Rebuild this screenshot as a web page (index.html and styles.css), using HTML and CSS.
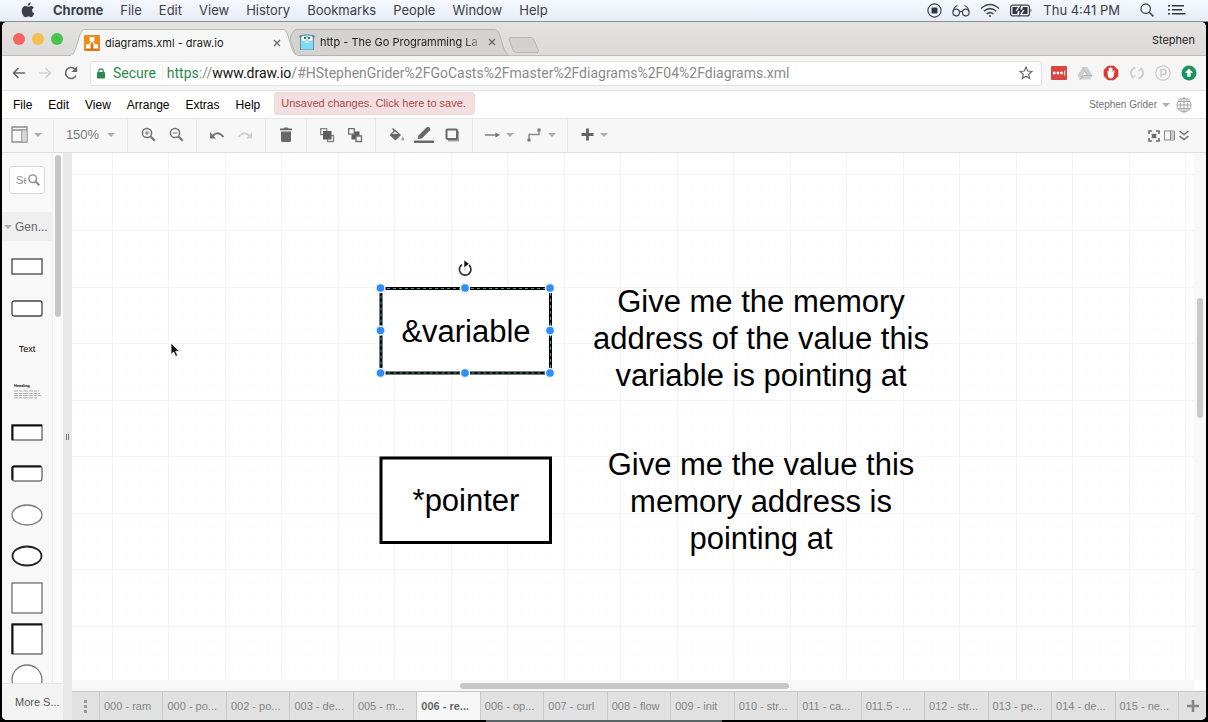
FILE: index.html
```html
<!DOCTYPE html>
<html lang="en">
<head>
<meta charset="utf-8">
<title>diagrams.xml - draw.io</title>
<link rel="stylesheet" href="styles.css">
</head>
<body>
<header class="macbar">
  <svg class="apple" width="14" height="16" viewBox="0 0 14 16"><path fill="#3c4046" d="M9.7.6c.1 1.8-1.4 3.3-3 3.3C6.500 2.200 8 .7 9.700.6zM7 4.700c.8 0 1.600-.8 3-.8 1.100 0 2.200.6 2.800 1.500-2.500 1.500-2 4.900.5 5.900-.5 1.500-1.800 3.900-3.200 3.900-1 0-1.500-.6-2.700-.6s-1.700.6-2.600.6C2.700 15.200.7 11.500.7 8.700c0-3 1.900-4.700 3.700-4.700 1.200 0 1.900.7 2.600.7z"/></svg>
  <nav class="macmenu">
    <a href="#" class="strong">Chrome</a><a href="#">File</a><a href="#">Edit</a><a href="#">View</a><a href="#">History</a><a href="#">Bookmarks</a><a href="#">People</a><a href="#">Window</a><a href="#">Help</a>
  </nav>
  <div class="macstatus">
    <svg width="15" height="15" viewBox="0 0 15 15"><circle cx="7.500" cy="7.500" r="6.600" fill="none" stroke="#44484e" stroke-width="1.200"/><rect x="4.500" y="4.500" width="6" height="6" rx="1" fill="#33373d"/></svg>
    <svg width="18" height="13" viewBox="0 0 18 13" fill="none" stroke="#44484e" stroke-width="1.200"><circle cx="4.200" cy="8.500" r="3.300"/><circle cx="13.800" cy="8.500" r="3.300"/><path d="M7.400 8q1.600-1.400 3.200 0M1 7.500C1.500 4.500 3 2.500 5.500 1.500M17 7.500C16.500 4.500 15 2.500 12.500 1.500"/></svg>
    <svg width="20" height="15" viewBox="0 0 20 15" fill="none" stroke="#44484e" stroke-width="1.500"><path d="M1 5.500q9-8 18 0M3.800 8.300q6.200-5.400 12.400 0M6.600 11q3.400-2.800 6.800 0"/><circle cx="10" cy="13" r="1" fill="#44484e" stroke="none"/></svg>
    <svg width="23" height="13" viewBox="0 0 23 13"><rect x=".6" y="1.100" width="18.800" height="10.800" rx="2" fill="none" stroke="#44484e" stroke-width="1.200"/><path d="M20.500 4.500q2 2 0 4z" fill="#44484e"/><path d="M2.500 3h5.500l-2.500 4h2.500l-1 3H2.500zM13 3h4.500v7h-5.500l2.500-4h-2.500z" fill="#33373d"/><path d="M11.500 0L7 7h2.700l-1.200 6L13 5.800h-2.700z" fill="#33373d"/></svg>
    <span class="clock">Thu 4:41 PM</span>
    <svg class="spot" width="14" height="14" viewBox="0 0 14 14" fill="none" stroke="#44484e" stroke-width="1.300"><circle cx="5.700" cy="5.700" r="4.700"/><path d="M9.200 9.200l4.200 4.200" stroke-width="1.600"/></svg>
    <svg width="18" height="12" viewBox="0 0 18 12" fill="#33373d"><path d="M0 1h2v1.500H0zM4 1h12v1.500H4zM0 5h2v1.500H0zM4 5h10v1.500H4zM0 9h2v1.500H0zM4 9h13.500v1.500H4z"/></svg>
  </div>
</header>

<div class="window">
  <div class="tabstrip">
    <div class="lights"><i class="red"></i><i class="yellow"></i><i class="green"></i></div>
    <div class="btab active">
      <svg class="shape" width="228" height="27" viewBox="0 0 228 27"><path d="M0 27C4 26 5 22 8 12S12 .5 16 .5H212C216 .5 217 3 219.500 12S224 26 228 27z" fill="#f6f6f6" stroke="#b9b9b8"/><path d="M1 27h226" stroke="#f6f6f6" stroke-width="2"/></svg>
      <svg class="fav" width="16" height="16" viewBox="0 0 16 16"><rect width="16" height="16" rx="1" fill="#ee8a1a"/><path d="M9 9l7 7H4L2 14z" fill="#d3740d"/><path d="M8 5L4.500 11M8 5l3.500 6" stroke="#fff" stroke-width="1.300"/><path d="M5.600 2h4.800v4H5.600zM2 9.500h4.600v4H2zM9.400 9.500H14v4H9.400z" fill="#fff"/></svg>
      <span class="btitle">diagrams.xml - draw.io</span>
      <button class="close" aria-label="Close tab"><svg width="8" height="8" viewBox="0 0 8 8"><path d="M1 1l6 6M7 1L1 7" stroke="#666" stroke-width="1.200"/></svg></button>
    </div>
    <div class="btab idle">
      <svg class="shape" width="223" height="27" viewBox="0 0 223 27"><path d="M7 26.500L1 10Q4 .5 8 .5H205C209 .5 210 3 212.500 12S217 25 220 26.500z" fill="#d4d3d2" stroke="#b4b3b2"/></svg>
      <svg class="fav" width="16" height="16" viewBox="0 0 16 16"><circle cx="2" cy="2.500" r="1.600" fill="#52777f"/><circle cx="14" cy="2.500" r="1.600" fill="#52777f"/><path d="M1.500 16V4Q1.500 1 5 1h6q3.500 0 3.500 3v12z" fill="#7edcf8" stroke="#567b86" stroke-width=".8"/><circle cx="5" cy="4.500" r="2.500" fill="#fff"/><circle cx="11" cy="4.500" r="2.500" fill="#fff"/><circle cx="6" cy="4" r="1" fill="#222"/><circle cx="10" cy="4" r="1" fill="#222"/><path d="M6.500 7h3v2h-3z" fill="#ece3cd"/></svg>
      <span class="btitle fade">http - The Go Programming La</span>
      <button class="close" aria-label="Close tab"><svg width="8" height="8" viewBox="0 0 8 8"><path d="M1 1l6 6M7 1L1 7" stroke="#666" stroke-width="1.200"/></svg></button>
    </div>
    <button class="newtab" aria-label="New tab"><svg width="32" height="16" viewBox="0 0 32 16"><path d="M2.500.5H23q2 0 3 2.500l4.500 10.500q.5 2-1.500 2H8.500q-2.500 0-3.500-2.500L1 2.500Q.6.500 2.500.5z" fill="#d2d1d0" stroke="#b8b7b6"/></svg></button>
    <span class="profile">Stephen</span>
  </div>

  <div class="addressbar">
    <button aria-label="Back"><svg width="14" height="12" viewBox="0 0 14 12" fill="none" stroke="#666" stroke-width="1.500"><path d="M13 6H1.500M6.500 1l-5 5 5 5"/></svg></button>
    <button aria-label="Forward"><svg width="14" height="12" viewBox="0 0 14 12" fill="none" stroke="#d2d2d2" stroke-width="1.500"><path d="M1 6h11.500M7.500 1l5 5-5 5"/></svg></button>
    <button aria-label="Reload"><svg width="14" height="14" viewBox="0 0 14 14"><path d="M12 9.500A5.500 5.500 0 1 1 11 3.200" fill="none" stroke="#666" stroke-width="1.600"/><path d="M13.200 0v6H7.500z" fill="#666"/></svg></button>
    <div class="omnibox">
      <svg width="8" height="11" viewBox="0 0 8 11"><rect y="4" width="8" height="6.500" rx=".8" fill="#2a8a4c"/><path d="M1.800 4.500V3a2.200 2.200 0 0 1 4.400 0v1.500" fill="none" stroke="#2a8a4c" stroke-width="1.200"/></svg>
      <span class="secure">Secure</span>
      <span class="url"><span class="scheme">https</span>://<span class="host">www.draw.io</span>/#HStephenGrider%2FGoCasts%2Fmaster%2Fdiagrams%2F04%2Fdiagrams.xml</span>
      <svg class="star" width="14" height="14" viewBox="0 0 14 14"><path d="M7 1l1.700 4 4.300.4-3.300 2.900 1 4.200L7 10.300l-3.700 2.200 1-4.200L1 5.400 5.300 5z" fill="none" stroke="#666" stroke-width="1.200"/></svg>
    </div>
    <div class="exts">
      <svg width="16" height="16" viewBox="0 0 16 16"><rect y="1" width="16" height="14" rx="1" fill="#d5473f"/><path d="M2 6.800h2.500v2.400H2zM5.700 6.800h2.500v2.400H5.700zM9.400 6.800h2.500v2.400H9.400zM13.200 5.500h1v5h-1z" fill="#fff"/></svg>
      <svg width="16" height="16" viewBox="0 0 16 16"><path d="M5.600 2h4.800l5 8.500-2.300 4H3l-2.300-4z" fill="#cfcfcf"/><path d="M8 6l2.500 4.500h-5z" fill="#f5f5f5"/><path d="M5.600 2L10 10M3 14.500l3-4h9" stroke="#b5b5b5" fill="none"/></svg>
      <svg width="16" height="16" viewBox="0 0 16 16"><path d="M5 .7h6L15.300 5v6L11 15.300H5L.7 11V5z" fill="#db3a32"/><path d="M4.500 6q1-.8 1.200.8V3.500q.6-1 1.200 0v-1q.7-1 1.300 0v1q.8-1 1.300 0v4l1-2q1.200-.6 1 .6L10.800 11q-.7 2.500-3 2.500T4.800 11z" fill="#fff"/></svg>
      <svg width="16" height="16" viewBox="0 0 16 16" fill="none" stroke="#d0d0d0" stroke-width="2"><path d="M6.500 2.500C1.500 4 .5 9 4 12.500M9.500 13.500c5-1.500 6-6.500 2.500-10"/><path d="M3 13.300L6.500 10M13 2.700L9.500 6" stroke-width="1.500"/></svg>
      <svg width="16" height="16" viewBox="0 0 16 16" fill="none" stroke="#cacaca"><circle cx="8" cy="8" r="7.200" stroke-width="1.200"/><path d="M6 12.500V4.500h2.500a2.500 2.500 0 0 1 0 5H6" stroke-width="1.400"/></svg>
      <svg width="16" height="16" viewBox="0 0 16 16"><circle cx="8" cy="8" r="7.500" fill="#1f9462"/><path d="M8 3.500l4 4.300H9.700v4H6.300v-4H4z" fill="#fff"/></svg>
    </div>
  </div>

  <div class="appmenu">
    <nav><a href="#">File</a><a href="#">Edit</a><a href="#">View</a><a href="#">Arrange</a><a href="#">Extras</a><a href="#">Help</a></nav>
    <button class="unsaved">Unsaved changes. Click here to save.</button>
    <button class="user">Stephen Grider <i class="caret"></i></button>
    <svg width="16" height="16" viewBox="0 0 16 16" fill="none" stroke="#a5a5a5"><circle cx="8" cy="8" r="7"/><ellipse cx="8" cy="8" rx="3.500" ry="7"/><path d="M8 1v14M1 8h14M2 4.500h12M2 11.500h12"/></svg>
  </div>

  <div class="toolbar">
    <div class="group first">
      <button class="wide" aria-label="View panels"><svg width="17" height="17" viewBox="0 0 17 17" fill="none" stroke="#8a8a8a" stroke-width="1.300"><path d="M1 1h15v15H1zM1 4h15M11 4v12"/><path d="M11.500 4.500h4v11h-4z" fill="#d8d8d8" stroke="none"/></svg><i class="caret"></i></button>
    </div>
    <div class="group zoom"><button class="wide">150% <i class="caret"></i></button></div>
    <div class="group">
      <button aria-label="Zoom in"><svg width="15" height="15" viewBox="0 0 15 15" fill="none" stroke="#747474"><circle cx="6" cy="6" r="4.600" stroke-width="1.500"/><path d="M9.500 9.500l4.300 4.300" stroke-width="2"/><path d="M3.800 6h4.400M6 3.800v4.400"/></svg></button>
      <button aria-label="Zoom out"><svg width="15" height="15" viewBox="0 0 15 15" fill="none" stroke="#747474"><circle cx="6" cy="6" r="4.600" stroke-width="1.500"/><path d="M9.500 9.500l4.300 4.300" stroke-width="2"/><path d="M3.800 6h4.400"/></svg></button>
    </div>
    <div class="group">
      <button aria-label="Undo"><svg width="16" height="10" viewBox="0 0 16 10"><path d="M1 2v6.500h6z" fill="#747474"/><path d="M3.500 6Q9 0 14.500 7" fill="none" stroke="#747474" stroke-width="2"/></svg></button>
      <button aria-label="Redo"><svg width="16" height="10" viewBox="0 0 16 10"><path d="M15 2v6.500H9z" fill="#d2d2d2"/><path d="M12.500 6Q7 0 1.500 7" fill="none" stroke="#d2d2d2" stroke-width="2"/></svg></button>
    </div>
    <div class="group">
      <button aria-label="Delete"><svg width="14" height="16" viewBox="0 0 14 16" fill="#686868"><path d="M1 1.500h3.500l1-1h3l1 1H13v1.800H1zM2 4.500h10v9q0 1.500-1.500 1.500h-7Q2 15 2 13.500z"/></svg></button>
    </div>
    <div class="group">
      <button aria-label="To front"><svg width="16" height="16" viewBox="0 0 16 16"><path d="M1.700 1.700h6v6h-6zM8.500 8.500h6v6h-6z" fill="none" stroke="#858585" stroke-width="1.300"/><path d="M4 4h8.500v8.500H4z" fill="#5e5e5e"/></svg></button>
      <button aria-label="To back"><svg width="16" height="16" viewBox="0 0 16 16"><path d="M4.500 4.500h8v8h-8z" fill="#5e5e5e"/><path d="M1.700 1.700h5.500v5.500H1.700zM9 9h5.500v5.500H9z" fill="#f7f7f7" stroke="#6f6f6f" stroke-width="1.300"/></svg></button>
    </div>
    <div class="group">
      <button aria-label="Fill colour"><svg width="17" height="16" viewBox="0 0 17 16"><path d="M4.500 1.500L8 5" stroke="#686868" stroke-width="1.500"/><path d="M7 2.500L13 8l-5.500 5.500L1.500 8z" fill="#686868"/><path d="M7 4.500L10.200 7H4z" fill="#e9e9e9"/><path d="M14.800 9.500q3 4 0 4.200-3-.2 0-4.200z" fill="#aaa"/></svg></button>
      <button aria-label="Line colour"><svg width="20" height="18" viewBox="0 0 20 18" fill="#686868"><path d="M4.500 9.500l8-8q1.500-1.500 3 0t.3 3l-8 8L3.500 13z"/><path d="M0 14.500h20v2.500H0z"/></svg></button>
      <button aria-label="Shadow"><svg width="15" height="14" viewBox="0 0 15 14"><path d="M3 3h11v10.500H3z" fill="#a5a5a5"/><rect x="1.500" y="1.500" width="10.500" height="9.500" rx="1" fill="#f7f7f7" stroke="#6b6b6b" stroke-width="2"/></svg></button>
    </div>
    <div class="group">
      <button class="wide" aria-label="Connection"><svg width="15" height="8" viewBox="0 0 15 8"><path d="M0 4h12" stroke="#808080" stroke-width="1.400"/><path d="M10.500 1.500L15 4l-4.500 2.500z" fill="#747474"/></svg><i class="caret"></i></button>
      <button class="wide" aria-label="Waypoints"><svg width="16" height="16" viewBox="0 0 16 16"><path d="M3 13V7.500h10V3" fill="none" stroke="#8a8a8a" stroke-width="1.400"/><path d="M1.500 11.500h3v3h-3zM11.500 1.500h3v3h-3z" fill="#747474"/></svg><i class="caret"></i></button>
    </div>
    <div class="group last">
      <button class="wide" aria-label="Insert"><svg width="13" height="13" viewBox="0 0 13 13"><path d="M6.500.5v12M.5 6.500h12" stroke="#636363" stroke-width="2.800"/></svg><i class="caret"></i></button>
    </div>
    <div class="views">
      <button aria-label="Fullscreen"><svg width="12" height="12" viewBox="0 0 12 12" fill="none" stroke="#6c6c6c" stroke-width="1.600"><path d="M1 4V1h3M8 1h3v3M11 8v3H8M4 11H1V8"/><path d="M4.500 4.500h3v3h-3z" fill="#6c6c6c"/></svg></button>
      <button aria-label="Format panel"><svg width="11" height="11" viewBox="0 0 11 11" fill="none" stroke="#888"><path d="M.5 1h10v9H.5zM6.500 1v9"/><path d="M7 1.500h3v8H7z" fill="#ccc" stroke="none"/></svg></button>
      <button aria-label="Collapse"><svg width="10" height="11" viewBox="0 0 10 11" fill="none" stroke="#6c6c6c" stroke-width="1.500"><path d="M.5 1L5 4.500 9.500 1M.5 6L5 9.500 9.500 6"/></svg></button>
    </div>
  </div>

  <div class="workspace">
    <aside class="sidebar">
      <div class="palette">
        <div class="shapes">
          <label class="search"><input type="text" aria-label="Search shapes" value="Se"><svg width="12" height="12" viewBox="0 0 12 12" fill="none" stroke="#8c8c8c"><circle cx="4.700" cy="4.700" r="3.800" stroke-width="1.400"/><path d="M7.500 7.500L11.300 11.300" stroke-width="2"/></svg></label>
          <button class="section"><i class="caret"></i>Gen...</button>
          <ul class="items">
            <li><svg width="32" height="17" viewBox="0 0 32 17"><rect x="1" y="1" width="30" height="15" fill="#fff" stroke="#444" stroke-width="1.300"/></svg></li>
            <li><svg width="32" height="17" viewBox="0 0 32 17"><rect x="1" y="1" width="30" height="15" rx="2" fill="#fff" stroke="#444" stroke-width="1.300"/></svg></li>
            <li class="textitem">Text</li>
            <li class="heading"><b>Heading</b><svg width="27" height="9" viewBox="0 0 27 9"><path d="M0 1h25M0 3.500h26M0 5.500h27M0 7.800h24" stroke="#aaa" stroke-dasharray="4 1 3 1 5 1"/></svg></li>
            <li><svg width="32" height="17" viewBox="0 0 32 17"><rect x="1" y="1" width="30" height="15" fill="#fff" stroke="#333"/><path d="M1.500 16V1.500H31" fill="none" stroke="#111" stroke-width="2"/></svg></li>
            <li><svg width="32" height="17" viewBox="0 0 32 17"><rect x="1" y="1" width="30" height="15" rx="2" fill="#fff" stroke="#333"/><path d="M1.500 15V3q0-1.500 1.500-1.500h27" fill="none" stroke="#111" stroke-width="2"/></svg></li>
            <li><svg width="32" height="22" viewBox="0 0 32 22"><ellipse cx="16" cy="11" rx="15" ry="10" fill="#fff" stroke="#777" stroke-width="1.300"/></svg></li>
            <li><svg width="32" height="22" viewBox="0 0 32 22"><ellipse cx="16" cy="11" rx="14.500" ry="9.500" fill="#fff" stroke="#222" stroke-width="1.800"/></svg></li>
            <li><svg width="32" height="32" viewBox="0 0 32 32"><rect x="1" y="1" width="30" height="30" fill="#fff" stroke="#444"/></svg></li>
            <li><svg width="32" height="32" viewBox="0 0 32 32"><rect x="1" y="1" width="30" height="30" fill="#fff" stroke="#333"/><path d="M1.500 31V1.500H31" fill="none" stroke="#111" stroke-width="2"/></svg></li>
            <li><svg width="32" height="32" viewBox="0 0 32 32"><circle cx="16" cy="16" r="15" fill="#fff" stroke="#777" stroke-width="1.300"/></svg></li>
          </ul>
        </div>
        <div class="track"><div class="thumb"></div></div>
      </div>
      <button class="more">More S...</button>
    </aside>
    <div class="splitter"><i></i><i></i></div>
    <main class="editor">
      <div class="view">
        <svg class="layer" width="100%" height="100%">
          <defs>
            <pattern id="grid" x="40" y="21" width="113" height="113" patternUnits="userSpaceOnUse">
              <path d="M14.500 0v113M28.500 0v113M42.500 0v113M70.500 0v113M84.500 0v113M98.500 0v113M0 14.500h113M0 28.500h113M0 42.500h113M0 70.500h113M0 84.500h113M0 98.500h113" stroke="#fdfdfd"/>
              <path d="M.5 0v113M56.500 0v113M0 .5h113M0 56.500h113" stroke="#f3f3f3"/>
            </pattern>
          </defs>
          <rect width="100%" height="100%" fill="url(#grid)"/>
          <rect x="309" y="135.500" width="169.500" height="84.500" fill="#fff" stroke="#000" stroke-width="3"/>
          <rect x="309" y="135.500" width="169.500" height="84.500" fill="none" stroke="#3f9c9c" stroke-width="1" stroke-dasharray="3 3"/>
          <rect x="309" y="305" width="169.500" height="84.500" fill="#fff" stroke="#000" stroke-width="3"/>
          <g fill="#2f8df5" stroke="#e6f1fd" stroke-width="1.500">
            <circle cx="308.500" cy="135" r="4.500"/><circle cx="393" cy="135" r="4.500"/><circle cx="478" cy="135" r="4.500"/>
            <circle cx="308.500" cy="177.500" r="4.500"/><circle cx="478" cy="177.500" r="4.500"/>
            <circle cx="308.500" cy="220" r="4.500"/><circle cx="393" cy="220" r="4.500"/><circle cx="478" cy="220" r="4.500"/>
          </g>
          <path d="M390 111.500a5.800 5.800 0 1 0 7 .5" fill="none" stroke="#333" stroke-width="1.700"/>
          <path d="M392.300 107.500l4.500 3.200-4.500 3.800z" fill="#111"/><circle cx="393" cy="116" r=".7" fill="#999"/>
          <path d="M99 190v11.500l2.700-2.500 2 4.500 2-1-2-4.300h3.600z" fill="#111" stroke="#fff" stroke-width=".8"/>
        </svg>
        <div class="label variable">&amp;variable</div>
        <div class="label pointer">*pointer</div>
        <div class="label address">Give me the memory<br>address of the value this<br>variable is pointing at</div>
        <div class="label value">Give me the value this<br>memory address is<br>pointing at</div>
      </div>
      <div class="vtrack"><div class="thumb"></div></div>
      <div class="htrack"><div class="thumb"></div></div>
      <div class="corner"></div>
      <div class="pages">
        <button class="dots" aria-label="Pages"><i></i><i></i><i></i></button>
        <div class="pagelist">
          <button>000 - ram</button><button>000 - po...</button><button>002 - po...</button><button>003 - de...</button><button>005 - m...</button><button class="current">006 - re...</button><button>006 - op...</button><button>007 - curl</button><button>008 - flow</button><button>009 - init</button><button>010 - str...</button><button>011 - ca...</button><button>011.5 - ...</button><button>012 - str...</button><button>013 - pe...</button><button>014 - de...</button><button>015 - ne...</button>
        </div>
        <button class="add" aria-label="Insert page"><svg width="12" height="12" viewBox="0 0 12 12"><path d="M6 0v12M0 6h12" stroke="#858585" stroke-width="2.600"/></svg></button>
      </div>
    </main>
  </div>
</div>
<footer class="dock"><div></div></footer>
</body>
</html>
```
FILE: styles.css
```css
* { box-sizing: border-box; }
body {
  margin: 0;
  height: 100vh;
  display: flex;
  flex-direction: column;
  overflow: hidden;
  background: #000;
  font-family: "Liberation Sans", Arial, sans-serif;
  color: #000;
}
a { color: inherit; text-decoration: none; }
button { margin: 0; padding: 0; border: 0; background: none; font: inherit; color: inherit; }
svg { display: block; flex: none; }
i { display: block; }

.macbar {
  flex: none;
  height: 22px;
  display: flex;
  align-items: center;
  padding: 0 22px 1px 21px;
  background: linear-gradient(#f5f8fd, #e7ecf6);
  border-bottom: 1px solid #8b8e94;
  font-family: Inter, sans-serif;
  font-size: 13px;
  color: #3c4046;
}
.macmenu { display: flex; gap: 17px; margin-left: 18px; }
.strong { font-weight: 700; }
.macstatus { margin-left: auto; display: flex; align-items: center; gap: 10px; }
.spot { margin: 0 4px 0 10px; }

.window {
  flex: 1;
  min-height: 0;
  margin: 0 2px;
  display: flex;
  flex-direction: column;
  overflow: hidden;
  border-radius: 5px;
  background: #fff;
}

.tabstrip {
  flex: none;
  height: 34px;
  display: flex;
  align-items: flex-end;
  background: linear-gradient(#e3e2e0, #dcdbd9);
  border-bottom: 1px solid #bcbbba;
  font-family: Inter, sans-serif;
  font-size: 11px;
  color: #1c1c1c;
}
.lights { display: flex; gap: 7px; padding: 0 7px 10px 11px; }
.lights i { width: 12px; height: 12px; border-radius: 50%; }
.red { background: #f4655f; }
.yellow { background: #f6be4f; }
.green { background: #47c351; }
.btab { position: relative; height: 26px; display: flex; align-items: center; }
.btab > * { position: relative; }
.btab .shape { position: absolute; left: 0; top: 0; }
.active { width: 228px; padding: 0 17px 0 14px; margin-bottom: -1px; height: 27px; z-index: 1; }
.idle { width: 223px; padding: 0 16px 0 10px; margin-left: -9px; }
.btitle { flex: 1; margin-left: 5px; white-space: nowrap; overflow: hidden; }
.fade { -webkit-mask-image: linear-gradient(90deg, #000 85%, transparent); mask-image: linear-gradient(90deg, #000 85%, transparent); }
.newtab { margin: 0 0 2px -4px; }
.profile { margin-left: auto; padding: 0 11px 8px 0; }

.addressbar {
  flex: none;
  height: 35px;
  display: flex;
  align-items: center;
  padding: 0 9px 0 10px;
  gap: 12px;
  background: #f6f6f6;
  border-bottom: 1px solid #e3e3e3;
}
.omnibox {
  flex: 1;
  min-width: 0;
  height: 25px;
  display: flex;
  align-items: center;
  padding: 0 8px 0 6px;
  background: #fff;
  border: 1px solid #e2e2e2;
  border-radius: 3px;
  font-family: Roboto, sans-serif;
  font-size: 14px;
  color: #8a8a8a;
}
.secure { margin-left: 8px; padding-right: 6px; border-right: 1px solid #ececec; color: #2a8a4c; }
.url { flex: 1; margin-left: 4px; white-space: nowrap; overflow: hidden; }
.scheme { color: #2a8a4c; }
.host { color: #111; }
.exts { display: flex; gap: 10px; margin-left: -3px; }

.appmenu {
  flex: none;
  height: 28px;
  display: flex;
  align-items: center;
  padding: 0 14px 0 11px;
  border-bottom: 1px solid #e6e6e6;
  font-size: 12px;
}
.appmenu nav { display: flex; gap: 16px; }
.unsaved {
  margin: 0 auto 3px 14px;
  padding: 0 8px 0 6px;
  height: 23px;
  border: 1px solid #efd8d8;
  border-radius: 3px;
  background: #f3dfdf;
  color: #ab4a4b;
  font-size: 11px;
}
.user { display: flex; align-items: center; gap: 5px; margin-right: 6px; color: #707070; font-size: 10px; }
.caret { width: 0; height: 0; border: 4px solid transparent; border-top: 4px solid #adadad; border-bottom: 0; }

.toolbar {
  flex: none;
  height: 34px;
  display: flex;
  background: #f7f7f7;
  border-bottom: 1px solid #dedede;
  color: #777;
  font-size: 12px;
}
.group { display: flex; align-items: center; padding: 0 6px 2px; border-right: 1px solid #e6e6e6; }
.group button { width: 28px; height: 28px; display: flex; align-items: center; justify-content: center; }
.group .wide { width: 41px; gap: 6px; }
.first { width: 52px; padding: 0 5px 2px 4px; }
.zoom .wide { width: 61px; gap: 8px; font-size: 13px; }
.last { border-right: 0; }
.views { margin-left: auto; display: flex; align-items: center; gap: 4px; padding: 0 17px 0 0; }

.workspace { flex: 1; min-height: 0; display: flex; }
.sidebar { flex: none; width: 61px; display: flex; flex-direction: column; background: #f9f9f9; }
.palette { flex: 1; min-height: 0; display: flex; }
.shapes { flex: 1; overflow: hidden; display: flex; flex-direction: column; align-items: stretch; background: #f8f8f8; }
.search {
  flex: none;
  width: 36px;
  height: 28px;
  margin: 13px 0 18px 7px;
  padding: 0 4px 0 6px;
  display: flex;
  align-items: center;
  gap: 2px;
  background: #fff;
  border: 1px solid #d8d8d8;
  border-radius: 3px;
}
.search input { min-width: 0; flex: 1; width: 10px; padding: 0; border: 0; outline: 0; background: none; font: 11px "Liberation Sans", Arial, sans-serif; color: #8c8c8c; }
.section { flex: none; height: 29px; display: flex; align-items: center; gap: 3px; padding-left: 2px; background: #efefef; color: #666; font-size: 12px; }
.items { flex: none; height: 455px; margin: 5px 0 0; padding: 0; list-style: none; display: flex; flex-direction: column; }
.items li { flex: 1 0 0; min-height: 0; display: flex; align-items: center; justify-content: center; }
.textitem { font-size: 9px; }
.items .heading { flex-direction: column; align-items: flex-start; padding-left: 12px; gap: 1px; font-size: 4px; line-height: 6px; }
.track { flex: none; width: 11px; padding: 2px 2px 0; border-left: 1px solid #eee; background: #fafafa; }
.track .thumb { height: 162px; width: 6px; border-radius: 3px; background: #c6c6c6; }
.more { flex: none; height: 37px; border-top: 1px solid #e4e4e4; background: #f3f3f3; color: #555; font-size: 11px; text-align: left; padding-left: 13px; }
.splitter { flex: none; width: 9px; display: flex; align-items: center; justify-content: center; gap: 1px; background: #e8e8e8; }
.splitter i { width: 1px; height: 6px; background: #777; }

.editor {
  flex: 1;
  min-width: 0;
  display: grid;
  grid-template-columns: minmax(0, 1fr) 12px;
  grid-template-rows: minmax(0, 1fr) 11px 29px;
}
.view { position: relative; overflow: hidden; background: #fff; }
.layer { position: absolute; left: 0; top: 0; }
.label { position: absolute; text-align: center; font-size: 31px; line-height: 37px; white-space: nowrap; }
.variable { left: 309px; top: 160px; width: 170px; }
.pointer { left: 309px; top: 329px; width: 170px; }
.address { left: 519px; top: 130px; width: 340px; }
.value { left: 519px; top: 293px; width: 340px; }
.vtrack { padding: 145px 3px 0; background: #f8f8f8; }
.vtrack .thumb { height: 120px; border-radius: 3px; background: #c9c9c9; }
.htrack { padding: 3px 0 0; background: #f8f8f8; }
.htrack .thumb { width: 329px; height: 6px; margin-left: 388px; border-radius: 3px; background: #c6c6c6; }
.corner { background: #fff; }
.pages { grid-column: 1 / -1; display: flex; border-top: 1px solid #c6c6c6; background: #e1e1e1; color: #858585; font-size: 11px; }
.dots { width: 28px; display: flex; flex-direction: column; align-items: center; justify-content: center; gap: 2px; border-right: 1px solid #cbcbcb; }
.dots i { width: 3px; height: 3px; background: #999; }
.pagelist { flex: 1; min-width: 0; display: flex; }
.pagelist button { flex: 1 1 0; min-width: 0; padding: 0 0 0 4px; border-right: 1px solid #c8c8c8; text-align: left; white-space: nowrap; overflow: hidden; }
.pagelist .current { background: #f7f7f7; color: #666; font-weight: 700; }
.add { width: 27px; display: flex; align-items: center; justify-content: center; }

.dock { flex: none; height: 2px; padding: 0 486px; }
.dock div { height: 2px; background: #5a6465; }
```
